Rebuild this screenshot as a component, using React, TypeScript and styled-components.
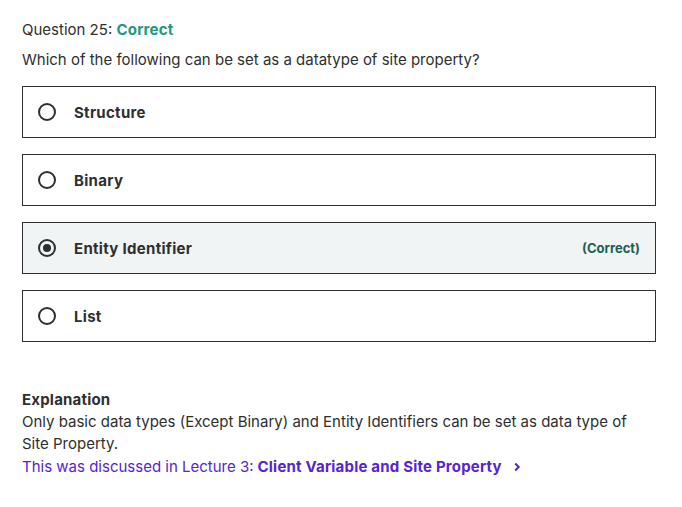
import styled, { createGlobalStyle } from "styled-components";

const GlobalStyle = createGlobalStyle`
    body {
        margin: 0;
        background: #ffffff;
        font-family: Inter, "Liberation Sans", sans-serif;
        color: #2d2f31;
    }
`

interface Option {
    label: string
    selected?: boolean
    correct?: boolean
}

const options: Option[] = [
    { label: 'Structure' },
    { label: 'Binary' },
    { label: 'Entity Identifier', selected: true, correct: true },
    { label: 'List' },
]

const App = () => {
    return (
        <>
            <GlobalStyle />
            <Page>
                <QuestionHeader>
                    Question 25: <Verdict>Correct</Verdict>
                </QuestionHeader>
                <Prompt>Which of the following can be set as a datatype of site property?</Prompt>
                <OptionList>
                    {options.map(o => (
                        <OptionBox key={o.label} $selected={!!o.selected}>
                            <Radio $checked={!!o.selected} />
                            <OptionLabel>{o.label}</OptionLabel>
                            {o.correct && <CorrectTag>(Correct)</CorrectTag>}
                        </OptionBox>
                    ))}
                </OptionList>
                <Explanation>
                    <ExplanationTitle>Explanation</ExplanationTitle>
                    <ExplanationText>
                        Only basic data types (Except Binary) and Entity Identifiers can be set as data type of Site Property.
                    </ExplanationText>
                    <LectureLink>
                        This was discussed in Lecture 3: <strong>Client Variable and Site Property</strong>
                        <Chevron width="10" height="10" viewBox="0 0 10 10">
                            <path d="M3.2 1.5 L6.7 5 L3.2 8.5" fill="none" stroke="#5624d0" strokeWidth="2" />
                        </Chevron>
                    </LectureLink>
                </Explanation>
            </Page>
        </>
    )
}

const Page = styled.div`
    padding: 19px 26px 0 22px;
    width: 634px;
`

const QuestionHeader = styled.div`
    font-size: 15px;
    line-height: 22px;
`

const Verdict = styled.span`
    font-weight: 700;
    letter-spacing: 0.2px;
    color: #1e9b7b;
`

const Prompt = styled.div`
    font-size: 15px;
    line-height: 22px;
    margin-top: 8px;
`

const OptionList = styled.div`
    display: flex;
    flex-direction: column;
    gap: 16px;
    margin-top: 15px;
`

const OptionBox = styled.div<{ $selected: boolean }>`
    display: flex;
    align-items: center;
    height: 52px;
    box-sizing: border-box;
    border: 1px solid #2d2f31;
    background: ${p => p.$selected ? '#f1f4f4' : '#ffffff'};
    padding: 0 15px 0 15px;
`

const Radio = styled.span<{ $checked: boolean }>`
    width: 18px;
    height: 18px;
    box-sizing: border-box;
    border: 2px solid #2d2f31;
    border-radius: 50%;
    display: flex;
    align-items: center;
    justify-content: center;
    margin-right: 18px;
    &::after {
        content: '';
        width: 8px;
        height: 8px;
        border-radius: 50%;
        background: #2d2f31;
        display: ${p => p.$checked ? 'block' : 'none'};
    }
`

const OptionLabel = styled.span`
    font-size: 15px;
    font-weight: 700;
    letter-spacing: 0.3px;
    flex: 1;
`

const CorrectTag = styled.span`
    font-size: 13px;
    font-weight: 700;
    color: #1e6055;
`

const Explanation = styled.div`
    margin-top: 47px;
    font-size: 15px;
    line-height: 22px;
`

const ExplanationTitle = styled.div`
    font-weight: 700;
    letter-spacing: 0.2px;
`

const ExplanationText = styled.div`
    width: 610px;
`

const LectureLink = styled.div`
    color: #5624d0;
    display: flex;
    align-items: center;
    margin-top: 1px;
    strong {
        margin-left: 4px;
        letter-spacing: 0.2px;
    }
`

const Chevron = styled.svg`
    margin-left: 10px;
`

export default App;
